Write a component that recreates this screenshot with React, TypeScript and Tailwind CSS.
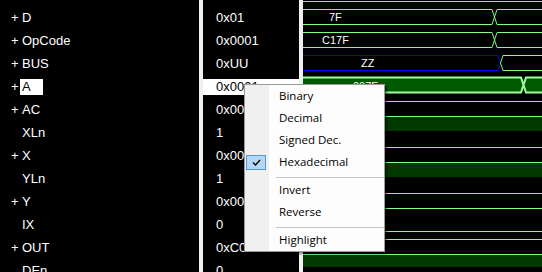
import React from "react";

type Row = { name: string; plus?: boolean; value: string; sel?: boolean };

const rows: Row[] = [
  { name: "D", plus: true, value: "0x01" },
  { name: "OpCode", plus: true, value: "0x0001" },
  { name: "BUS", plus: true, value: "0xUU" },
  { name: "A", plus: true, value: "0x0001", sel: true },
  { name: "AC", plus: true, value: "0x0001" },
  { name: "XLn", value: "1" },
  { name: "X", plus: true, value: "0x0001" },
  { name: "YLn", value: "1" },
  { name: "Y", plus: true, value: "0x0001" },
  { name: "IX", value: "0" },
  { name: "OUT", plus: true, value: "0xC001" },
  { name: "DEn", value: "0" },
];

const G = "#80ff80";
const FONT = "'Liberation Sans', Arial, sans-serif";

function Wave() {
  const bus = (i: number) => {
    const t = 9.5 + 23 * i;
    const b = 24.5 + 23 * i;
    return <path key={"b" + i} d={`M0 ${t} H239 M0 ${b} H239`} stroke={G} strokeWidth={1} fill="none" />;
  };
  const high = (i: number, h = 14) => {
    const t = 1.5 + 23 * i;
    return (
      <g key={"h" + i}>
        <rect x={0} y={t + 0.5} width={239} height={h} fill="#003800" />
        <path d={`M0 ${t} H239`} stroke={G} strokeWidth={1} />
      </g>
    );
  };
  return (
    <svg width={239} height={272} className="block" style={{ fontFamily: FONT }}>
      {/* previous row bottom */}
      <path d="M0 1.5 H239" stroke={G} strokeWidth={1} />
      {/* D */}
      <path d="M0 9.5 H189 L194 24.5 H239 M0 24.5 H189 L194 9.5 H239" stroke={G} strokeWidth={1} fill="none" />
      <text x={26} y={21} fill="#fff" fontSize={11}>7F</text>
      {/* OpCode */}
      <path d="M0 32.5 H189 L194 47.5 H239 M0 47.5 H189 L194 32.5 H239" stroke={G} strokeWidth={1} fill="none" />
      <text x={19} y={44} fill="#fff" fontSize={11}>C17F</text>
      {/* BUS */}
      <path d="M0 55.5 H195 L197.5 63 L195 70.5 H0" stroke="#0000ff" strokeWidth={1} fill="none" />
      <path d="M197.5 63 L200 55.5 H239 M197.5 63 L200 70.5 H239" stroke={G} strokeWidth={1} fill="none" />
      <text x={58} y={67} fill="#fff" fontSize={11}>ZZ</text>
      {/* A (selected) */}
      <polygon points="0,78 218,78 220.5,85.5 218,93 0,93" fill="#005a00" />
      <polygon points="223,78 239,78 239,93 223,93 220.5,85.5" fill="#005a00" />
      <path d="M0 77.5 H218 L223 92.5 H239 M0 92.5 H218 L223 77.5 H239" stroke="#9cff9c" strokeWidth={2} fill="none" />
      <text x={50} y={90} fill="#fff" fontSize={11}>007F</text>
      {bus(4)}
      {high(5)}
      {bus(6)}
      {high(7)}
      {bus(8)}
      <path d="M0 231.5 H239" stroke={G} strokeWidth={1} />
      {bus(10)}
      {high(11, 12)}
    </svg>
  );
}

function Menu() {
  const Item = ({ label, checked }: { label: string; checked?: boolean }) => (
    <div className="relative h-[22px] flex items-center pl-[34px] text-black">
      {checked && (
        <div className="absolute left-[1px] top-[4px] w-[20px] h-[15px] bg-[#b4d7f4] border border-[#4f98dc] flex items-center justify-center">
          <svg width="9" height="7" viewBox="0 0 9 7">
            <path d="M1 3.5 L3.5 6 L8 1" stroke="#000" strokeWidth={1.3} fill="none" />
          </svg>
        </div>
      )}
      <span>{label}</span>
    </div>
  );
  const Sep = () => (
    <div className="h-[6px] pt-[4px] pl-[31px]">
      <div className="h-px bg-[#c6c6c6]" />
    </div>
  );
  return (
    <div
      className="absolute left-[244px] top-[84px] w-[141px] h-[168px] border border-[#9a9a9a] bg-[linear-gradient(to_right,#f0f0f0_24px,#fdfdfd_24px)] shadow-[2px_2px_2px_rgba(0,0,0,0.45)] text-[11.5px]"
      style={{ fontFamily: "'Open Sans', 'Noto Sans', sans-serif" }}
    >
      <Item label="Binary" />
      <Item label="Decimal" />
      <Item label="Signed Dec." />
      <Item label="Hexadecimal" checked />
      <Sep />
      <Item label="Invert" />
      <Item label="Reverse" />
      <Sep />
      <Item label="Highlight" />
    </div>
  );
}

export default function App() {
  return (
    <div
      className="relative w-[542px] h-[272px] bg-black flex overflow-hidden text-white text-[13px]"
      style={{ fontFamily: FONT }}
    >
      <div className="w-[199px] pt-[6px] flex flex-col">
        {rows.map((r) => (
          <div key={r.name} className="h-[23px] shrink-0 flex items-center pl-[11px]">
            <span className="w-[11px]">{r.plus ? "+" : ""}</span>
            {r.sel ? (
              <span className="-ml-[2px] pl-[2px] w-[23px] h-[16px] flex items-center bg-white text-black">{r.name}</span>
            ) : (
              <span>{r.name}</span>
            )}
          </div>
        ))}
      </div>
      <div className="w-[4px] bg-[#f0f0f0]" />
      <div className="w-[96px] pt-[6px] flex flex-col">
        {rows.map((r) => (
          <div key={r.name} className="h-[23px] shrink-0 flex items-center">
            {r.sel ? (
              <div className="w-full h-[16px] flex items-center pl-[13px] bg-white text-black">{r.value}</div>
            ) : (
              <span className="pl-[13px]">{r.value}</span>
            )}
          </div>
        ))}
      </div>
      <div className="w-[4px] bg-[#f0f0f0]" />
      <div className="flex-1">
        <Wave />
      </div>
      <Menu />
    </div>
  );
}
